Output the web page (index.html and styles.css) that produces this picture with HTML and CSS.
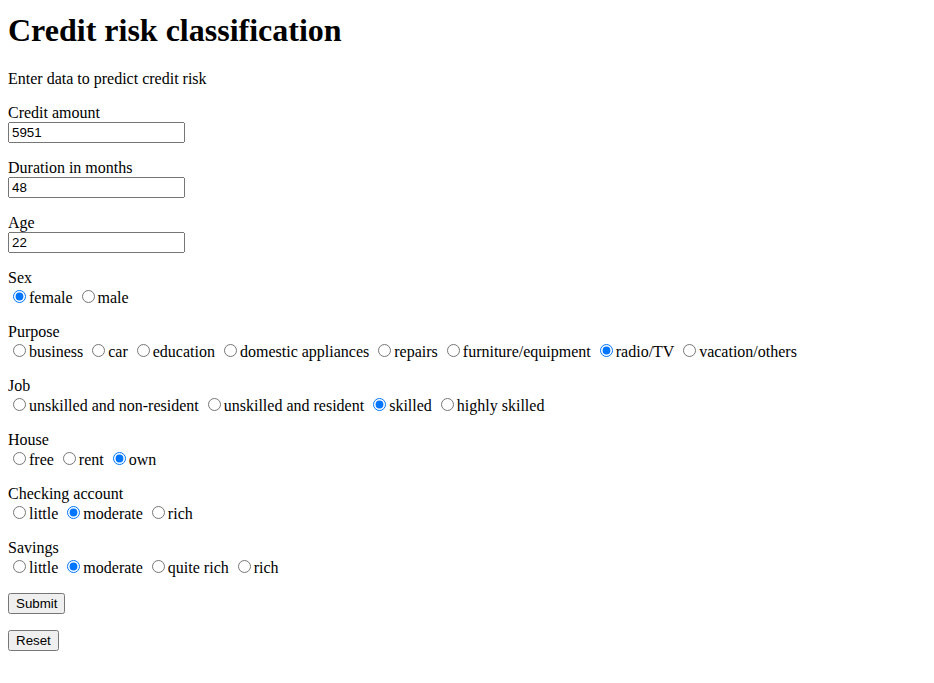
FILE: index.html
```html
<!DOCTYPE html>
<html>
<head>
<meta charset="utf-8">
<title>Credit risk classification</title>
<link rel="stylesheet" href="styles.css">
</head>
<body>
<h1 class="title">Credit risk classification</h1>
<p class="intro">Enter data to predict credit risk</p>
<form class="form">
<p class="field"><label for="amount">Credit amount</label><br><input class="text" id="amount" type="text" value="5951"></p>
<p class="field"><label for="duration">Duration in months</label><br><input class="text" id="duration" type="text" value="48"></p>
<p class="field"><label for="age">Age</label><br><input class="text" id="age" type="text" value="22"></p>
<p class="field">Sex<br><input type="radio" name="sex" id="sf" checked><label for="sf">female</label> <input type="radio" name="sex" id="sm"><label for="sm">male</label></p>
<p class="field">Purpose<br><input type="radio" name="purpose" id="p1"><label for="p1">business</label> <input type="radio" name="purpose" id="p2"><label for="p2">car</label> <input type="radio" name="purpose" id="p3"><label for="p3">education</label> <input type="radio" name="purpose" id="p4"><label for="p4">domestic appliances</label> <input type="radio" name="purpose" id="p5"><label for="p5">repairs</label> <input type="radio" name="purpose" id="p6"><label for="p6">furniture/equipment</label> <input type="radio" name="purpose" id="p7" checked><label for="p7">radio/TV</label> <input type="radio" name="purpose" id="p8"><label for="p8">vacation/others</label></p>
<p class="field">Job<br><input type="radio" name="job" id="j1"><label for="j1">unskilled and non-resident</label> <input type="radio" name="job" id="j2"><label for="j2">unskilled and resident</label> <input type="radio" name="job" id="j3" checked><label for="j3">skilled</label> <input type="radio" name="job" id="j4"><label for="j4">highly skilled</label></p>
<p class="field">House<br><input type="radio" name="house" id="h1"><label for="h1">free</label> <input type="radio" name="house" id="h2"><label for="h2">rent</label> <input type="radio" name="house" id="h3" checked><label for="h3">own</label></p>
<p class="field">Checking account<br><input type="radio" name="checking" id="c1"><label for="c1">little</label> <input type="radio" name="checking" id="c2" checked><label for="c2">moderate</label> <input type="radio" name="checking" id="c3"><label for="c3">rich</label></p>
<p class="field">Savings<br><input type="radio" name="savings" id="s1"><label for="s1">little</label> <input type="radio" name="savings" id="s2" checked><label for="s2">moderate</label> <input type="radio" name="savings" id="s3"><label for="s3">quite rich</label> <input type="radio" name="savings" id="s4"><label for="s4">rich</label></p>
<p class="field"><button class="btn" type="button">Submit</button></p>
<p class="field"><button class="btn" type="reset">Reset</button></p>
</form>
</body>
</html>
```
FILE: styles.css
```css
body {
  margin: 12px 8px 8px;
  font-family: "Liberation Serif", "Times New Roman", serif;
  font-size: 16px;
  color: #000;
  background: #fff;
}
.title {
  font-size: 32px;
  font-weight: bold;
  margin: 0 0 21.44px;
}
.intro {
  margin: 16px 0;
}
.form {
  margin: 0;
}
.field {
  margin: 16px 0;
}
.text {
  box-sizing: border-box;
  width: 177px;
  font-family: "Liberation Sans", Arial, sans-serif;
  font-size: 13.333px;
}
.btn {
  font-family: "Liberation Sans", Arial, sans-serif;
  font-size: 13.333px;
}
```
